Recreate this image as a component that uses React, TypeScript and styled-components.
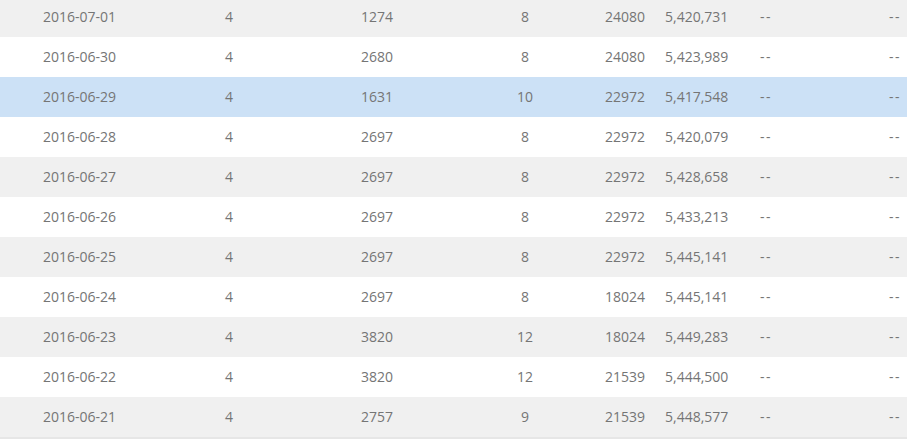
import styled, { createGlobalStyle } from 'styled-components';

const GlobalStyle = createGlobalStyle`
  html, body {
    margin: 0;
    padding: 0;
    background: #ffffff;
    overflow: hidden;
  }
`;

interface DailyRecord {
  date: string;
  level: number;
  count: number;
  hours: number;
  total: number;
  balance: string;
}

const records: DailyRecord[] = [
  { date: '2016-07-01', level: 4, count: 1274, hours: 8, total: 24080, balance: '5,420,731' },
  { date: '2016-06-30', level: 4, count: 2680, hours: 8, total: 24080, balance: '5,423,989' },
  { date: '2016-06-29', level: 4, count: 1631, hours: 10, total: 22972, balance: '5,417,548' },
  { date: '2016-06-28', level: 4, count: 2697, hours: 8, total: 22972, balance: '5,420,079' },
  { date: '2016-06-27', level: 4, count: 2697, hours: 8, total: 22972, balance: '5,428,658' },
  { date: '2016-06-26', level: 4, count: 2697, hours: 8, total: 22972, balance: '5,433,213' },
  { date: '2016-06-25', level: 4, count: 2697, hours: 8, total: 22972, balance: '5,445,141' },
  { date: '2016-06-24', level: 4, count: 2697, hours: 8, total: 18024, balance: '5,445,141' },
  { date: '2016-06-23', level: 4, count: 3820, hours: 12, total: 18024, balance: '5,449,283' },
  { date: '2016-06-22', level: 4, count: 3820, hours: 12, total: 21539, balance: '5,444,500' },
  { date: '2016-06-21', level: 4, count: 2757, hours: 9, total: 21539, balance: '5,448,577' },
];

const SELECTED_DATE = '2016-06-29';

const App = () => {
  return (
    <>
      <GlobalStyle />
      <TableViewport>
        <TableBody>
          {records.map((record, index) => (
            <Row
              key={record.date}
              $striped={index % 2 === 0}
              $selected={record.date === SELECTED_DATE}
            >
              <DateCell>{record.date}</DateCell>
              <CenterCell>{record.level}</CenterCell>
              <CenterCell>{record.count}</CenterCell>
              <CenterCell>{record.hours}</CenterCell>
              <TotalCell>{record.total}</TotalCell>
              <BalanceCell>{record.balance}</BalanceCell>
              <EmptyCell>--</EmptyCell>
              <LastCell>--</LastCell>
            </Row>
          ))}
        </TableBody>
      </TableViewport>
    </>
  );
};

export default App;

const TableViewport = styled.div`
  width: 907px;
  height: 439px;
  overflow: hidden;

  font-family: 'Open Sans', 'Noto Sans', sans-serif;
  font-size: 14px;
  color: #757575;
`;

const TableBody = styled.div`
  display: flex;
  flex-direction: column;

  // list is scrolled a few pixels down
  margin-top: -3px;
  border-bottom: 2px solid #e6e6e6;
`;

const Row = styled.div<{ $striped: boolean; $selected: boolean }>`
  display: grid;
  grid-template-columns: 160px 138px 158px 138px 61px 95px 100px 57px;
  align-items: center;

  height: 40px;
  padding-bottom: 1px;
  box-sizing: border-box;

  background-color: ${({ $striped, $selected }) =>
    $selected ? '#cce1f6' : $striped ? '#f0f0f0' : '#ffffff'};
`;

const Cell = styled.div`
  white-space: nowrap;
  line-height: 18px;
`;

const DateCell = styled(Cell)`
  padding-left: 43px;
`;

const CenterCell = styled(Cell)`
  text-align: center;
`;

const TotalCell = styled(Cell)`
  text-align: right;
  padding-right: 10px;
`;

const BalanceCell = styled(Cell)`
  padding-left: 10px;
`;

const EmptyCell = styled(Cell)`
  padding-left: 10px;
  letter-spacing: 1.5px;
`;

const LastCell = styled(Cell)`
  text-align: right;
  padding-right: 6px;
  letter-spacing: 1.5px;
`;
